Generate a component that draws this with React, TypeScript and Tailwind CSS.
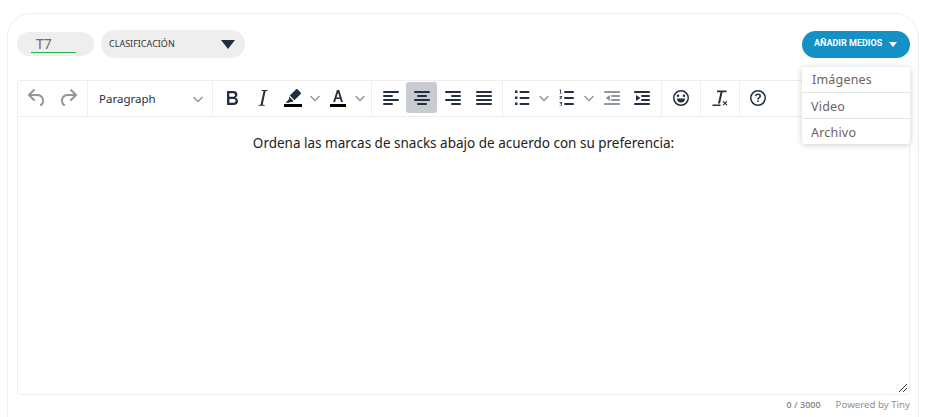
import type { ReactNode } from "react";

function Icon({ children, muted }: { children: ReactNode; muted?: boolean }) {
  return (
    <svg width="24" height="24" viewBox="0 0 24 24" className={muted ? "fill-[#222f3e] opacity-50" : "fill-[#222f3e]"}>
      {children}
    </svg>
  );
}

function Chevron() {
  return (
    <svg width="12" height="12" viewBox="0 0 12 12" className="fill-none stroke-[#222f3e] opacity-50" strokeWidth="1.3">
      <path d="M1.500 4l4.500 4.500L10.500 4" />
    </svg>
  );
}

function Btn({ children, active }: { children: ReactNode; active?: boolean }) {
  return (
    <div className={active ? "flex h-[31px] w-[31px] items-center justify-center rounded-[3px] bg-[#c8cbcf]" : "flex h-[31px] w-[31px] items-center justify-center"}>
      {children}
    </div>
  );
}

function Split({ children }: { children: ReactNode }) {
  return (
    <div className="flex h-[31px] w-[45px] items-center">
      <div className="mr-[2px] flex w-[29px] justify-center">{children}</div>
      <Chevron />
    </div>
  );
}

function Group({ children, className }: { children: ReactNode; className: string }) {
  return <div className={"flex h-full items-center border-r border-[#eeeeee] pb-[2px] " + className}>{children}</div>;
}

const lines = {
  left: "M5 5h14a1 1 0 0 1 0 2H5a1 1 0 1 1 0-2Zm0 4h8a1 1 0 0 1 0 2H5a1 1 0 1 1 0-2Zm0 8h8a1 1 0 0 1 0 2H5a1 1 0 0 1 0-2Zm0-4h14a1 1 0 0 1 0 2H5a1 1 0 0 1 0-2Z",
  center: "M5 5h14a1 1 0 0 1 0 2H5a1 1 0 1 1 0-2Zm3 4h8a1 1 0 0 1 0 2H8a1 1 0 1 1 0-2Zm0 8h8a1 1 0 0 1 0 2H8a1 1 0 0 1 0-2Zm-3-4h14a1 1 0 0 1 0 2H5a1 1 0 0 1 0-2Z",
  right: "M5 5h14a1 1 0 0 1 0 2H5a1 1 0 1 1 0-2Zm6 4h8a1 1 0 0 1 0 2h-8a1 1 0 0 1 0-2Zm0 8h8a1 1 0 0 1 0 2h-8a1 1 0 0 1 0-2Zm-6-4h14a1 1 0 0 1 0 2H5a1 1 0 0 1 0-2Z",
  justify: "M5 5h14a1 1 0 0 1 0 2H5a1 1 0 1 1 0-2Zm0 4h14a1 1 0 0 1 0 2H5a1 1 0 1 1 0-2Zm0 4h14a1 1 0 0 1 0 2H5a1 1 0 0 1 0-2Zm0 4h14a1 1 0 0 1 0 2H5a1 1 0 0 1 0-2Z",
};

const indentLines = "M5 5h14a1 1 0 0 1 0 2H5a1 1 0 1 1 0-2Zm7 4h7a1 1 0 0 1 0 2h-7a1 1 0 0 1 0-2Zm0 4h7a1 1 0 0 1 0 2h-7a1 1 0 0 1 0-2Zm-7 4h14a1 1 0 0 1 0 2H5a1 1 0 0 1 0-2Z";

export default function App() {
  return (
    <div className="h-[417px] w-[927px] overflow-hidden bg-white pl-[7px] pr-[8px] pt-[13px] font-['Noto_Sans',sans-serif]">
      <div className="h-[440px] rounded-[24px] border border-[#eeeeee] pl-[9px] pr-[8px] pt-[16px]">
        {/* top row */}
        <div className="flex h-[28px] items-center">
          <div className="h-[24px] w-[77px] rounded-full bg-[#eeeeee] pl-[14px]">
            <div className="h-[21px] w-[45px] border-b border-[#22b14c] pl-[5px] text-[14px] leading-[24px] text-[#6f6a66]">T7</div>
          </div>
          <div className="ml-[7px] flex h-[28px] w-[144px] items-center justify-between rounded-full bg-[#eeeeee] pl-[8px] pr-[10px] text-[9px] text-[#333]">
            CLASIFICACIÓN
            <svg width="14" height="9" viewBox="0 0 14 9" className="fill-[#222f3e]"><path d="M0 0h14L7 9Z" /></svg>
          </div>
          <div className="relative ml-auto">
            <div className="flex h-[27px] w-[108px] items-center justify-between whitespace-nowrap rounded-full bg-[#1390c6] pl-[12px] pr-[13px] font-['Roboto',sans-serif] text-[9px] font-bold text-white">
              AÑADIR MEDIOS
              <svg width="8" height="5" viewBox="0 0 8 5" className="fill-white"><path d="M0 0h8L4 5Z" /></svg>
            </div>
            <div className="absolute left-0 top-[36px] z-10 w-[108px] rounded-[3px] bg-white text-[12.500px] tracking-[0.2px] text-[#6d6262] shadow-[0_1px_6px_rgba(0,0,0,0.2)]">
              <div className="h-[26px] border-b border-[#e4e4e4] pl-[10px] leading-[25px]">Imágenes</div>
              <div className="h-[26px] border-b border-[#e4e4e4] pl-[9px] leading-[27px]">Video</div>
              <div className="h-[25px] pl-[9px] leading-[27px]">Archivo</div>
            </div>
          </div>
        </div>

        {/* editor */}
        <div className="mt-[22px] h-[315px] w-[893px] rounded-[2px] border border-[#eeeeee]">
          <div className="flex h-[36px] items-center border-b border-[#eeeeee]">
            <Group className="w-[70px] justify-center">
              <Icon muted><path d="M6.4 8H12c3.7 0 6.2 2 6.8 5.1.6 2.7-.4 5.6-2.3 6.8a1 1 0 0 1-1-1.8c1.1-.6 1.8-2.7 1.4-4.6-.5-2.1-2.1-3.5-4.9-3.5H6.4l3.3 3.3a1 1 0 1 1-1.4 1.4l-5-5a1 1 0 0 1 0-1.4l5-5a1 1 0 0 1 1.4 1.4L6.4 8Z" /></Icon>
              <div className="w-[7px]" />
              <Icon muted><path d="M17.6 8H12c-3.700 0-6.200 2-6.800 5.100-.6 2.700.4 5.600 2.300 6.800a1 1 0 0 0 1-1.800c-1.100-.6-1.800-2.700-1.400-4.600.5-2.100 2.100-3.500 4.900-3.500h5.600l-3.300 3.300a1 1 0 1 0 1.400 1.400l5-5a1 1 0 0 0 0-1.400l-5-5a1 1 0 0 0-1.400 1.400L17.600 8Z" /></Icon>
            </Group>
            <div className="flex h-full w-[125px] items-center justify-between border-r border-[#eeeeee] pl-[11px] pr-[8px] text-[11.500px] text-[#222f3e]">
              Paragraph
              <Chevron />
            </div>
            <Group className="w-[159px] pl-[3px]">
              <Btn><Icon><path d="M7.8 19c-.3 0-.5 0-.6-.2l-.2-.5V5.7c0-.2 0-.4.2-.5l.6-.2h5c1.5 0 2.7.3 3.5 1 .7.6 1.1 1.4 1.1 2.5a3 3 0 0 1-.6 1.9c-.4.6-1 1-1.6 1.2.4.1.9.3 1.3.6s.8.7 1 1.2c.4.4.5 1 .5 1.6 0 1.3-.4 2.300-1.300 3-.8.7-2.100 1-3.800 1H7.800Zm5-8.300c.6 0 1.200-.1 1.600-.5.4-.3.6-.7.6-1.300 0-1.100-.8-1.700-2.300-1.700H9.300v3.500h3.500Zm.5 6c.7 0 1.300-.1 1.700-.4.4-.4.6-.9.6-1.500s-.2-1-.7-1.400c-.4-.3-1-.4-2-.4H9.400v3.800h3.900Z" /></Icon></Btn>
              <Btn><Icon><path d="M16.700 4.700l-1.800.3c-.2.1-.3.200-.4.400L11.700 18.400c0 .2.100.3.300.3l1.800.3-.1.8H7.400l.1-.8 1.800-.3c.2-.1.3-.2.4-.4L12.500 5.300c0-.2-.1-.3-.3-.3l-1.800-.3.1-.7h6.300l-.1.7Z" /></Icon></Btn>
              <Split><Icon><path d="M3 18h18v3H3Z" className="fill-black" /><path d="M16.500 3.300l3.200 3.200c.4.400.4 1 0 1.400l-6.300 6.300-4.600-4.600 6.300-6.300c.4-.4 1-.4 1.400 0ZM8 10.600l4.400 4.400-.9.9H9l-.8.800H4.500l3.500-3.500v-2.600Z" /></Icon></Split>
              <Split><Icon><path d="M4 18h16v3H4Z" className="fill-black" /><path d="M11 4h2.200l3.800 12h-2l-.9-3H10l-.9 3H7.100Zm-.500 7.400h3.100L12.100 6.400Z" /></Icon></Split>
            </Group>
            <Group className="w-[131px] pl-[3px]">
              <Btn><Icon><path d={lines.left} /></Icon></Btn>
              <Btn active><Icon><path d={lines.center} /></Icon></Btn>
              <Btn><Icon><path d={lines.right} /></Icon></Btn>
              <Btn><Icon><path d={lines.justify} /></Icon></Btn>
            </Group>
            <Group className="w-[159px] pl-[4px]">
              <Split><Icon><path d="M10.500 5h8a1 1 0 0 1 0 2h-8a1 1 0 0 1 0-2Zm0 6h8a1 1 0 0 1 0 2h-8a1 1 0 0 1 0-2Zm0 6h8a1 1 0 0 1 0 2h-8a1 1 0 0 1 0-2ZM5 4.500h2.500V7H5Zm0 6h2.500V13H5Zm0 6h2.500V19H5Z" /></Icon></Split>
              <Split><Icon><path d="M10 17h8a1 1 0 0 1 0 2h-8a1 1 0 0 1 0-2Zm0-6h8a1 1 0 0 1 0 2h-8a1 1 0 0 1 0-2Zm0-6h8a1 1 0 0 1 0 2h-8a1 1 0 1 1 0-2ZM6 3.500v3.500h1v.6H4.500V7h.700V4.300H4.500v-.8ZM4.500 10H7v.8L5.500 12.500H7v.6H4.500v-.7L6 10.700H4.500Zm0 6H7v3.500H4.500v-.6h1.700v-.8H5v-.6h1.200v-.8H4.500Z" /></Icon></Split>
              <div className="flex w-[30px] justify-center"><Icon muted><path d={indentLines} /><path d="M10 9v6l-4.500-3Z" /></Icon></div>
              <div className="flex w-[30px] justify-center"><Icon><path d={indentLines} /><path d="M6 9v6l4.500-3Z" /></Icon></div>
            </Group>
            <Group className="w-[39px] justify-center">
              <Icon><path d="M12 4a8 8 0 1 1 0 16 8 8 0 0 1 0-16Zm0 1.500a6.500 6.500 0 1 0 0 13 6.500 6.500 0 0 0 0-13ZM9 8.500a1.300 1.300 0 1 1 0 2.600 1.300 1.300 0 0 1 0-2.600Zm6 0a1.300 1.300 0 1 1 0 2.600 1.300 1.300 0 0 1 0-2.600Zm-7 4h8a4 4 0 0 1-8 0Z" /></Icon>
            </Group>
            <Group className="w-[39px] justify-center pr-[2px]">
              <Icon><path d="M5.500 18.500h8V20h-8ZM10 4.500h9.500v1.700h-4L13 17.500h-2l2.500-11.300H10Zm5.700 11.300.8-.8 1.500 1.500 1.500-1.500.8.800-1.500 1.500 1.500 1.500-.8.800-1.500-1.500-1.500 1.500-.8-.8 1.500-1.500Z" /></Icon>
            </Group>
            <div className="flex h-full w-[39px] items-center justify-center pb-[2px] pr-[3px]">
              <Icon><path d="M12 4a8 8 0 1 1 0 16 8 8 0 0 1 0-16Zm0 1.500a6.500 6.500 0 1 0 0 13 6.500 6.500 0 0 0 0-13Zm-.800 9h1.600v1.600h-1.600ZM12 7.500c1.800 0 3 1 3 2.500 0 1.100-.6 1.700-1.400 2.300-.6.400-.8.700-.8 1.200h-1.600c0-1 .4-1.600 1.300-2.200.6-.4.900-.7.900-1.200 0-.6-.6-1.100-1.400-1.100s-1.400.5-1.500 1.300H9c.1-1.700 1.300-2.800 3-2.800Z" /></Icon>
            </div>
          </div>
          <div className="relative h-[277px]">
            <p className="pt-[16px] text-center text-[13.500px] leading-[20px] text-[#222]">Ordena las marcas de snacks abajo de acuerdo con su preferencia:</p>
            <svg width="10" height="10" viewBox="0 0 10 10" className="absolute bottom-[1px] right-[1px] stroke-[#333]">
              <path d="M1 9l8-8M5 9l4-4" />
            </svg>
          </div>
        </div>

        {/* footer */}
        <div className="flex h-[20px] w-[893px] items-center justify-end text-[#8f8f8f]">
          <span className="text-[9px] font-semibold">0 / 3000</span>
          <span className="ml-[15px] text-[9.700px]">Powered by Tiny</span>
        </div>
      </div>
    </div>
  );
}
